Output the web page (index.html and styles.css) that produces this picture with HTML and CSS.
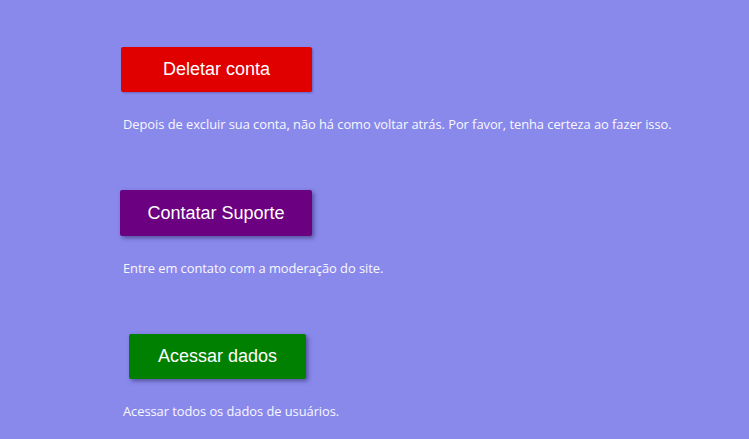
FILE: index.html
```html
<!DOCTYPE html>
<html lang="pt">
<head>
<meta charset="utf-8">
<title>Conta</title>
<link rel="stylesheet" href="styles.css">
</head>
<body>
<main class="page">
  <section class="block">
    <button class="btn btn-red">Deletar conta</button>
    <p class="desc">Depois de excluir sua conta, não há como voltar atrás. Por favor, tenha certeza ao fazer isso.</p>
  </section>
  <section class="block">
    <button class="btn btn-purple">Contatar Suporte</button>
    <p class="desc">Entre em contato com a moderação do site.</p>
  </section>
  <section class="block">
    <button class="btn btn-green">Acessar dados</button>
    <p class="desc">Acessar todos os dados de usuários.</p>
  </section>
</main>
</body>
</html>
```
FILE: styles.css
```css
html, body {
  margin: 0;
  padding: 0;
  background: #8989ec;
  height: 100%;
  overflow: hidden;
}
.page {
  display: flex;
  flex-direction: column;
  gap: 57px;
  padding: 47px 0 0 120px;
}
.block {
  display: flex;
  flex-direction: column;
  align-items: flex-start;
  gap: 23px;
}
.btn {
  border: none;
  border-radius: 2px;
  color: #ffffff;
  font-family: "Liberation Sans", Arial, sans-serif;
  font-size: 18px;
  height: 45px;
  padding: 0;
  box-shadow: 2px 2px 4px rgba(40, 30, 90, 0.55);
}
.btn-red {
  background: #e00000;
  width: 191px;
  margin-left: 1px;
  box-shadow: 1px 1px 2px rgba(40, 30, 90, 0.35);
}
.btn-purple {
  background: #6b0080;
  width: 192px;
  height: 46px;
}
.btn-green {
  background: #008000;
  width: 177px;
  margin-left: 9px;
}
.desc {
  margin: 0 0 0 3px;
  font-family: "Open Sans", sans-serif;
  font-size: 12.9px;
  letter-spacing: -0.05px;
  line-height: 18px;
  color: #f8f8fd;
}
```
